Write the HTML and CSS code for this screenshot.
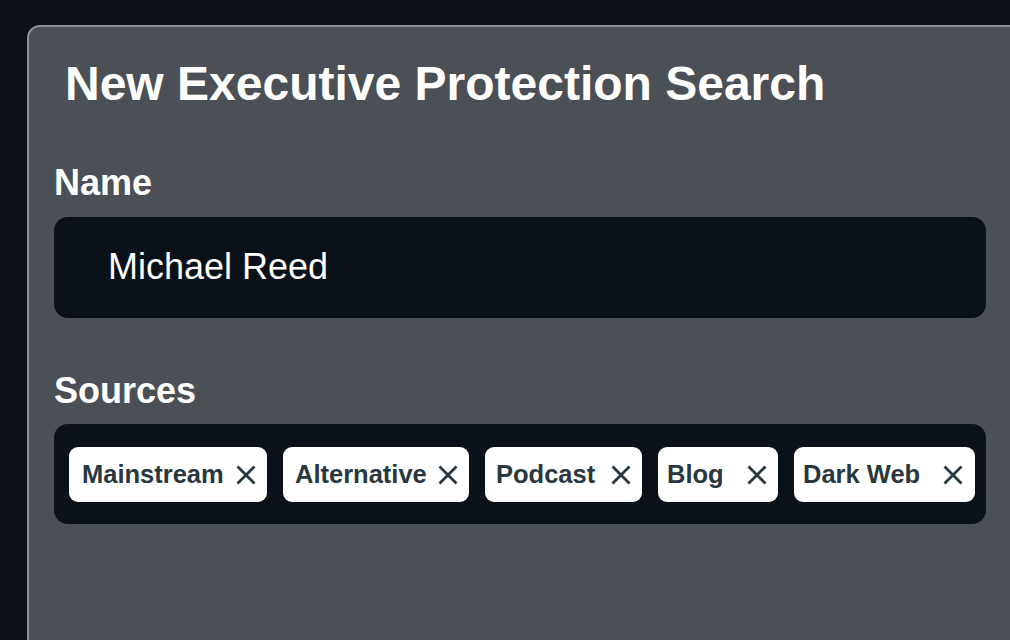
FILE: index.html
```html
<!DOCTYPE html>
<html lang="en">
<head>
<meta charset="utf-8">
<title>New Executive Protection Search</title>
<link rel="stylesheet" href="styles.css">
</head>
<body>
  <main class="panel">
    <h1 class="title">New Executive Protection Search</h1>

    <label class="label" for="name">Name</label>
    <div class="input" id="name">Michael Reed</div>

    <div class="label label--sources">Sources</div>
    <div class="tags">
      <span class="tag tag--mainstream"><span class="tag__text">Mainstream</span><svg class="tag__x" viewBox="0 0 22 22"><path d="M2.5 2.5 L19.5 19.5 M19.5 2.5 L2.5 19.5"/></svg></span>
      <span class="tag tag--alternative"><span class="tag__text">Alternative</span><svg class="tag__x" viewBox="0 0 22 22"><path d="M2.5 2.5 L19.5 19.5 M19.5 2.5 L2.5 19.5"/></svg></span>
      <span class="tag tag--podcast"><span class="tag__text">Podcast</span><svg class="tag__x" viewBox="0 0 22 22"><path d="M2.5 2.5 L19.5 19.5 M19.5 2.5 L2.5 19.5"/></svg></span>
      <span class="tag tag--blog"><span class="tag__text">Blog</span><svg class="tag__x" viewBox="0 0 22 22"><path d="M2.5 2.5 L19.5 19.5 M19.5 2.5 L2.5 19.5"/></svg></span>
      <span class="tag tag--darkweb"><span class="tag__text">Dark Web</span><svg class="tag__x" viewBox="0 0 22 22"><path d="M2.5 2.5 L19.5 19.5 M19.5 2.5 L2.5 19.5"/></svg></span>
    </div>
  </main>
</body>
</html>
```

FILE: styles.css
```css
html, body {
  margin: 0;
  height: 100%;
  overflow: hidden;
}

body {
  background: #0b1117;
  font-family: "Liberation Sans", Arial, sans-serif;
  padding: 25px 0 0 27px;
  box-sizing: border-box;
  display: flex;
  flex-direction: column;
}

.panel {
  flex: 1;
  min-height: 0;
  box-sizing: border-box;
  background: #4b4f56;
  border-top: 2px solid #8e9399;
  border-left: 2px solid #8e9399;
  border-radius: 13px 0 0 0;
  padding: 29px 0 0 25px;
  display: flex;
  flex-direction: column;
  align-items: flex-start;
}

.title {
  margin: 0 0 0 11px;
  font-size: 48px;
  line-height: 56px;
  font-weight: 700;
  color: #ffffff;
}

.label {
  display: block;
  margin-top: 51px;
  font-size: 36px;
  line-height: 40px;
  font-weight: 700;
  color: #ffffff;
}

.label--sources {
  margin-top: 53px;
}

.input {
  box-sizing: border-box;
  width: 932px;
  height: 101px;
  margin-top: 14px;
  padding: 30px 0 0 54px;
  background: #0b1118;
  border-radius: 14px;
  color: #ffffff;
  font-size: 36px;
  line-height: 40px;
}

.tags {
  box-sizing: border-box;
  width: 932px;
  height: 100px;
  margin-top: 13px;
  padding: 23px 0 0 15px;
  background: #0b1118;
  border-radius: 14px;
  display: flex;
  gap: 16px;
}

.tag {
  box-sizing: border-box;
  height: 55px;
  display: flex;
  align-items: center;
  padding: 0 10px 0 13px;
  background: #ffffff;
  border-radius: 9px;
  color: #293840;
  font-size: 25.5px;
  font-weight: 700;
}

.tag__text {
  flex: 1;
  white-space: nowrap;
}

.tag__x {
  width: 22px;
  height: 22px;
  flex: none;
}

.tag__x path {
  stroke: #293840;
  stroke-width: 2.8;
  fill: none;
}

.tag--mainstream { width: 198px; padding-left: 13px; }
.tag--alternative { width: 186px; padding-left: 12px; }
.tag--podcast { width: 157px; padding-left: 11px; }
.tag--blog { width: 120px; padding-left: 9px; }
.tag--darkweb { width: 181px; padding-left: 9px; padding-right: 11px; }
```
